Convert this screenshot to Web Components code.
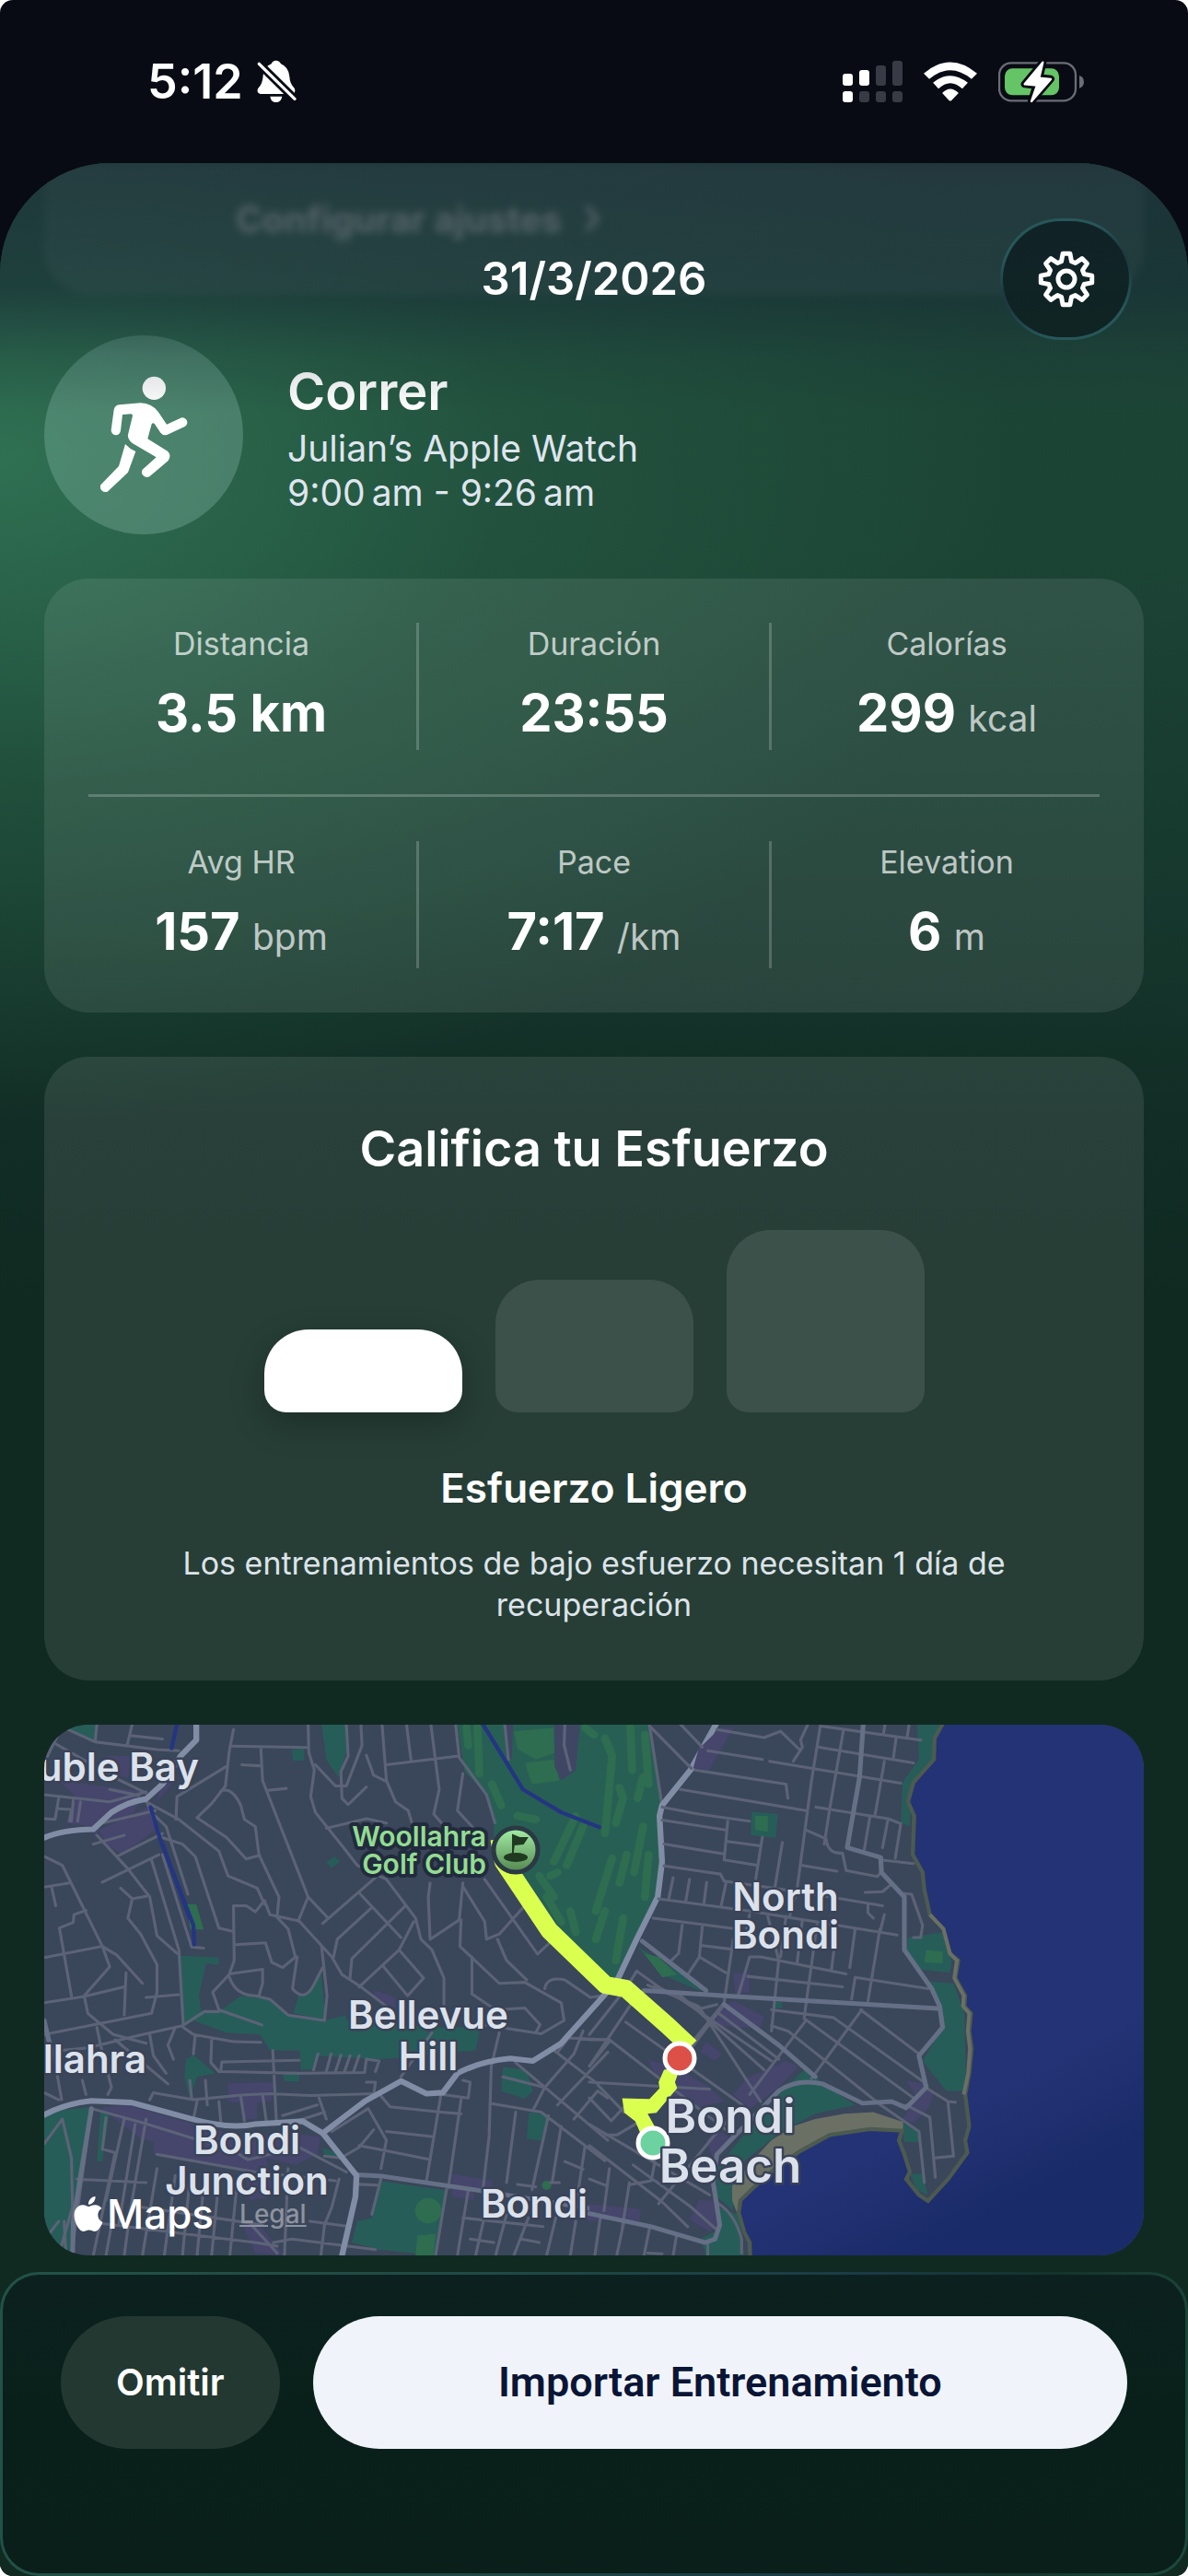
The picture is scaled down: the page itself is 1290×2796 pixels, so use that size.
<!DOCTYPE html>
<html lang="es">
<head>
<meta charset="utf-8">
<meta name="viewport" content="width=device-width, initial-scale=1">
<title>Entrenamiento</title>
<style>
  html { background: #fff; }
  body {
    margin: 0;
    font-family: Inter, "Liberation Sans", sans-serif;
    color: #fff;
  }
</style>
</head>
<body>

<workout-screen>
  <status-bar slot="status">5:12</status-bar>

  <sheet-header slot="header">31/3/2026</sheet-header>
  <settings-banner>Configurar ajustes</settings-banner>

  <activity-summary>
    Correr
    <span slot="source">Julian’s Apple Watch</span>
    <span slot="time">9:00&#8239;am - 9:26&#8239;am</span>
  </activity-summary>

  <stats-card>
    <stat-cell slot="top" label="Distancia">3.5 km</stat-cell>
    <stat-cell slot="top" label="Duración" divided>23:55</stat-cell>
    <stat-cell slot="top" label="Calorías" unit="kcal" divided>299</stat-cell>
    <stat-cell slot="bottom" label="Avg HR" unit="bpm">157</stat-cell>
    <stat-cell slot="bottom" label="Pace" unit="/km" divided>7:17</stat-cell>
    <stat-cell slot="bottom" label="Elevation" unit="m" divided>6</stat-cell>
  </stats-card>

  <effort-card>
    <span slot="title">Califica tu Esfuerzo</span>
    <span slot="level">Esfuerzo Ligero</span>
    Los entrenamientos de bajo esfuerzo necesitan 1 día de recuperación
  </effort-card>

  <route-map></route-map>

  <action-bar slot="footer">
    <pill-button kind="ghost">Omitir</pill-button>
    <pill-button kind="solid">Importar Entrenamiento</pill-button>
  </action-bar>
</workout-screen>

<script>
//SCREEN: STATUS BAR, THEN THE SHEET WITH ITS CONTENT AND FOOTER
class WorkoutScreen extends HTMLElement {
  constructor() {
    super();
    const root = this.attachShadow({ mode: 'open' });
    root.innerHTML = `
    <style>
      :host {
        display: flex;
        flex-direction: column;
        min-height: 100vh;
        background: #080b14;
        border-radius: 14px;
        overflow: hidden;
      }
      .sheet {
        position: relative;
        flex: 1;
        display: flex;
        flex-direction: column;
        border-radius: 120px 120px 0 0;
        overflow: hidden;
        background:
          radial-gradient(ellipse 1100px 720px at 0 320px, rgba(48, 114, 84, .95), rgba(40, 96, 70, .5) 50%, transparent),
          linear-gradient(#1d4537 0, #1c4435 420px, #173a2f 740px, #122d25 1040px, #102a22 1240px);
      }
      .content {
        display: flex;
        flex-direction: column;
        gap: 48px;
        padding: 0 48px;
      }
      .footer {
        flex: 1;
        display: flex;
        margin-top: 18px;
      }
      ::slotted([slot=footer]) { flex: 1; }
    </style>
    <slot name="status"></slot>
    <main class="sheet">
      <div class="content"><slot></slot></div>
      <slot name="header"></slot>
      <div class="footer"><slot name="footer"></slot></div>
    </main>`;
  }
}

//CLOCK AND SYSTEM ICONS
class StatusBar extends HTMLElement {
  constructor() {
    super();
    const root = this.attachShadow({ mode: 'open' });
    root.innerHTML = `
    <style>
      :host {
        display: flex;
        align-items: center;
        justify-content: space-between;
        height: 177px;
        padding: 0 113px 0 160px;
        font-size: 52px;
        font-weight: 600;
      }
      div { display: flex; align-items: center; }
      .clock { gap: 15px; }
      .system { gap: 23px; }
      svg { display: block; }
    </style>
    <div class="clock">
      <slot></slot>
      <svg width="43" height="47" viewBox="418 44 129 141">
        <path fill="#fff" d="M480 46Q491 46 496 57Q521 67 524 98Q525 122 540 136Q546 150 535 155L430 155Q416 152 421 138Q437 122 438 95Q440 66 465 57Q469 46 480 46Z"/>
        <path fill="#fff" d="M461 163h39q-4 19-20 19q-16 0-19-19z"/>
        <path stroke="#080b14" stroke-width="27" d="M418 50L552 182"/>
        <path stroke="#fff" stroke-width="10" stroke-linecap="round" d="M425 57L541 171"/>
      </svg>
    </div>
    <div class="system">
      <svg width="65" height="45" viewBox="108 72 195 135" fill="#383b45">
        <g fill="#fff">
          <rect x="108" y="114" width="33" height="39" rx="9"/>
          <rect x="162" y="102" width="33" height="51" rx="9"/>
          <rect x="108" y="171" width="33" height="36" rx="9"/>
        </g>
        <rect x="216" y="87" width="33" height="66" rx="9"/>
        <rect x="270" y="72" width="33" height="81" rx="9"/>
        <rect x="162" y="171" width="33" height="36" rx="9"/>
        <rect x="216" y="171" width="33" height="36" rx="9"/>
        <rect x="270" y="171" width="33" height="36" rx="9"/>
      </svg>
      <svg width="58" height="43" viewBox="371 75 173 128" fill="#fff">
        <path d="M371 113Q457 39 544 113L526 131Q457 74 389 131Z"/>
        <path d="M401 143Q457 97 514 143L496 162Q457 126 419 162Z"/>
        <path d="M431 176Q457 149 484 176L461 200Q457 203 453 200Z"/>
      </svg>
      <svg width="93" height="46" viewBox="612 71 279 138">
        <rect x="615" y="78" width="249" height="123" rx="39" fill="none" stroke="#6b6d75" stroke-width="7"/>
        <path fill="#6b6d75" d="M876 119Q891 123 891 140Q891 156 876 160Z"/>
        <rect x="633" y="96" width="177" height="87" rx="25" fill="#65c466"/>
        <g stroke-linejoin="round">
          <path fill="#080b14" stroke="#080b14" stroke-width="24" d="M757 76L698 147L736 151L720 203L783 130L746 126Z"/>
          <path fill="#fff" stroke="#fff" stroke-width="7" d="M757 76L698 147L738 151L720 203L783 131L745 127Z"/>
        </g>
      </svg>
    </div>`;
  }
}

//DATE AND SETTINGS, LAID OVER THE SCROLLED CONTENT
class SheetHeader extends HTMLElement {
  constructor() {
    super();
    const root = this.attachShadow({ mode: 'open' });
    root.innerHTML = `
    <style>
      :host {
        position: absolute;
        inset: 0 0 auto;
        box-sizing: border-box;
        display: grid;
        grid-template-columns: 1fr auto 1fr;
        align-items: center;
        height: 270px;
        padding: 60px 61px 78px;
        background: linear-gradient(rgba(28, 44, 56, .72) 0, rgba(24, 46, 54, .64) 135px, rgba(24, 46, 54, .18) 210px, transparent);
        pointer-events: none;
      }
      h1 {
        grid-column: 2;
        margin: 0;
        font-size: 49px;
        line-height: 60px;
        font-weight: 600;
      }
      button {
        justify-self: end;
        display: grid;
        place-items: center;
        width: 143px;
        height: 132px;
        padding: 0;
        color: inherit;
        border: 3px solid transparent;
        border-radius: 66px;
        background:
          linear-gradient(#112227, #0f2423) padding-box,
          linear-gradient(160deg, #27575a 0 25%, #1d3a40 45% 55%, #27575a 80%) border-box;
        pointer-events: auto;
      }
    </style>
    <h1><slot></slot></h1>
    <button aria-label="Ajustes">
      <svg width="62" height="62" viewBox="-31 -31 62 62" fill="none" stroke="currentColor" stroke-width="5" stroke-linejoin="round">
        <path d="${this.gear()}"/>
        <circle r="9"/>
      </svg>
    </button>`;
  }

  //EIGHT TEETH, EACH WITH TWO OUTER AND TWO BASE POINTS
  gear() {
    let d = '';
    for (let i = 0; i < 8; i++) {
      const points = [[20, -16], [28, -8], [28, 8], [20, 16]].map(([r, turn]) => {
        const a = (i * 45 + turn) * Math.PI / 180;
        return `${(r * Math.sin(a)).toFixed(1)} ${(-r * Math.cos(a)).toFixed(1)}`;
      });
      d += `${i ? 'L' : 'M'}${points.join('L')}`;
    }
    return d + 'Z';
  }
}

//CARD THAT HAS SCROLLED UNDER THE HEADER
class SettingsBanner extends HTMLElement {
  constructor() {
    super();
    const root = this.attachShadow({ mode: 'open' });
    root.innerHTML = `
    <style>
      :host {
        box-sizing: border-box;
        display: flex;
        align-items: center;
        gap: 24px;
        height: 142px;
        margin-bottom: -3px;
        padding: 0 208px 22px;
        border-radius: 0 0 48px 48px;
        background: rgba(255, 255, 255, .11);
        color: rgba(255, 255, 255, .75);
        font-size: 39px;
        font-weight: 700;
        filter: blur(4px);
      }
    </style>
    <span><slot></slot></span>
    <svg width="18" height="30" viewBox="0 0 18 30" fill="none" stroke="currentColor" stroke-width="5"><path d="M3 2L14 15L3 28"/></svg>`;
  }
}

//ACTIVITY ICON, NAME, SOURCE AND TIME
class ActivitySummary extends HTMLElement {
  constructor() {
    super();
    const root = this.attachShadow({ mode: 'open' });
    root.innerHTML = `
    <style>
      :host {
        display: flex;
        align-items: center;
        gap: 48px;
      }
      .icon {
        flex: none;
        width: 216px;
        height: 216px;
        border-radius: 50%;
        background: rgba(134, 184, 170, .36);
      }
      svg { display: block; }
      h2 {
        margin: 0;
        padding-top: 2px;
        font-size: 56px;
        line-height: 76px;
        font-weight: 600;
      }
      p {
        margin: 0;
        font-size: 39px;
        line-height: 48px;
        color: #dfe5ee;
      }
    </style>
    <div class="icon">
      <svg width="216" height="216" viewBox="-6 12 648 648" fill="#fff">
        <circle cx="352" cy="184" r="38"/>
        <path d="M238 238L308 232Q345 233 366 262L393 302L437 282A15 15 0 0 1 452 309L394 336Q382 340 373 329L354 301Q348 295 344 301L331 349L396 389Q410 402 398 420L337 472A17 17 0 0 1 314 449L359 409L281 363Q265 350 267 335L282 274Q282 268 276 268L249 270L243 322A15 15 0 0 1 212 320L221 254Q224 240 238 238Z"/>
        <path d="M258 366Q272 382 292 390L267 458L200 521A17 17 0 0 1 178 499L237 438Z"/>
      </svg>
    </div>
    <div>
      <h2><slot></slot></h2>
      <p><slot name="source"></slot></p>
      <p><slot name="time"></slot></p>
    </div>`;
  }
}

//TWO ROWS OF FIGURES
class StatsCard extends HTMLElement {
  constructor() {
    super();
    const root = this.attachShadow({ mode: 'open' });
    root.innerHTML = `
    <style>
      :host {
        display: flex;
        flex-direction: column;
        gap: 48px;
        padding: 48px;
        border-radius: 48px;
        background: rgba(255, 255, 255, .09);
      }
      .row { display: flex; gap: 24px; }
      hr {
        width: 100%;
        height: 3px;
        margin: 0;
        border: 0;
        background: rgba(255, 255, 255, .22);
      }
      ::slotted(*) { flex: 1 1 0; }
      ::slotted([divided]) { flex: 1 1 27px; }
    </style>
    <div class="row"><slot name="top"></slot></div>
    <hr>
    <div class="row"><slot name="bottom"></slot></div>`;
  }
}

//LABEL OVER A FIGURE, WITH A RULE BEFORE IT WHEN DIVIDED
class StatCell extends HTMLElement {
  constructor() {
    super();
    const root = this.attachShadow({ mode: 'open' });
    const unit = this.getAttribute('unit');
    root.innerHTML = `
    <style>
      :host { display: flex; gap: 24px; text-align: center; }
      :host([divided])::before {
        content: '';
        width: 3px;
        background: rgba(255, 255, 255, .2);
      }
      .cell { flex: 1; }
      .label {
        font-size: 34px;
        line-height: 46px;
        color: rgba(255, 255, 255, .7);
      }
      .value {
        margin-top: 12px;
        font-size: 56px;
        line-height: 80px;
        font-weight: 700;
        white-space: nowrap;
      }
      .unit {
        font-size: 39px;
        line-height: 46px;
        font-weight: 400;
        color: rgba(255, 255, 255, .7);
      }
    </style>
    <div class="cell">
      <div class="label">${this.getAttribute('label')}</div>
      <div class="value"><slot></slot>${unit ? ` <span class="unit">${unit}</span>` : ''}</div>
    </div>`;
  }
}

//EFFORT RATING IN THREE STEPS
class EffortCard extends HTMLElement {
  constructor() {
    super();
    const root = this.attachShadow({ mode: 'open' });
    root.innerHTML = `
    <style>
      :host {
        display: block;
        padding: 60px 96px;
        border-radius: 48px;
        background: rgba(255, 255, 255, .095);
        text-align: center;
      }
      h2 {
        margin: 0;
        font-size: 54px;
        line-height: 80px;
        font-weight: 600;
      }
      .levels {
        display: flex;
        justify-content: center;
        align-items: flex-end;
        gap: 36px;
        margin: 48px 0;
      }
      input {
        appearance: none;
        width: 215px;
        height: 90px;
        margin: 0;
        border-radius: 48px 48px 24px 24px;
        background: rgba(255, 255, 255, .1);
      }
      .medium { height: 144px; }
      .high { height: 198px; }
      input:checked {
        background: #fff;
        box-shadow: 0 12px 36px rgba(0, 0, 0, .25);
      }
      h3 {
        margin: 0;
        font-size: 44px;
        line-height: 69px;
        font-weight: 600;
      }
      p {
        max-width: 960px;
        margin: 24px auto 0;
        font-size: 34px;
        line-height: 45px;
        color: #dde3e9;
      }
    </style>
    <h2><slot name="title"></slot></h2>
    <div class="levels">
      <input type="radio" name="effort" aria-label="Ligero" checked>
      <input type="radio" name="effort" aria-label="Moderado" class="medium">
      <input type="radio" name="effort" aria-label="Alto" class="high">
    </div>
    <h3><slot name="level"></slot></h3>
    <p><slot></slot></p>`;
  }
}

//MAP WITH THE ROUTE
class RouteMap extends HTMLElement {
  constructor() {
    super();
    const root = this.attachShadow({ mode: 'open' });
    root.innerHTML = `
    <style>
      :host {
        display: block;
        position: relative;
        border-radius: 48px;
        overflow: hidden;
      }
      svg { display: block; }
      .map { width: 100%; height: auto; }
      .road { fill: none; stroke-linejoin: round; stroke-linecap: round; }
      .minor { stroke: #5c6377; stroke-width: 8; }
      .mid { stroke: #656f86; stroke-width: 13; }
      .major { stroke: #818da5; stroke-width: 16; }
      .place {
        font-weight: 600;
        fill: #dce2ec;
        text-anchor: middle;
        stroke: #3a4358;
        stroke-width: 5;
        paint-order: stroke;
        stroke-linejoin: round;
      }
      .town { font-size: 42px; }
      .edge { text-anchor: end; }
      .beach { font-size: 51px; }
      .club {
        font-size: 30px;
        font-weight: 600;
        fill: #93dc92;
        text-anchor: end;
        stroke: #222b3d;
        stroke-width: 8;
        paint-order: stroke;
        stroke-linejoin: round;
      }
      .credit {
        position: absolute;
        left: 32px;
        bottom: 18px;
        display: flex;
        align-items: center;
        gap: 4px;
        font-size: 44px;
        line-height: 54px;
        font-weight: 500;
      }
      a {
        margin-left: 24px;
        font-size: 28px;
        font-weight: 500;
        color: #8d939f;
      }
    </style>
    <svg class="map" viewBox="0 0 1194 576">
      <defs>
        <linearGradient id="sea" x1="0" y1="0" x2=".4" y2="1">
          <stop offset=".8" stop-color="#243375"/>
          <stop offset="1" stop-color="#1a2b69"/>
        </linearGradient>
        <linearGradient id="pin" x1="0" y1="0" x2="0" y2="1">
          <stop offset="0" stop-color="#a5efa6"/>
          <stop offset="1" stop-color="#54864f"/>
        </linearGradient>
      </defs>
      <rect width="1194" height="576" fill="#3a465a"/>

      <!-- west half -->
      <g transform="translate(-8 -12) scale(.3954 .3827)">
        <g fill="#275d59">
          <path d="M70 35L165 30L158 80Z"/>
          <path d="M782 30L848 30L850 110L828 180L795 130Z"/>
          <path d="M700 102L733 98L735 132L704 134Z"/>
          <path d="M795 420L818 405L832 420L808 438Z"/>
          <path d="M393 686L500 692L500 712L465 708L445 800L452 850L500 845L560 800L630 808L690 855L790 870L850 855L850 870L1080 890L1218 890L1205 955L1090 965L1000 975L940 980L850 975L770 970L755 1010L725 1010L722 955L640 955L612 910L520 905L430 870L402 880Z"/>
          <path d="M780 735L795 870L705 850L718 800L750 790Z"/>
          <path d="M410 980L430 968L490 1020L440 1030L420 1090L405 1030Z"/>
          <path d="M675 1022L722 1020L720 1043L680 1042Z"/>
          <path d="M1280 1002L1345 1010L1362 1070L1340 1092L1275 1070Z"/>
          <path d="M1352 1130L1405 1140L1385 1212L1345 1205Z"/>
          <path d="M20 1130L150 1115L100 1440L98 1537L20 1537Z"/>
          <path d="M175 1130L200 1130L180 1270L165 1270Z"/>
          <path d="M940 1325L1125 1352L1095 1537L940 1520L865 1500L880 1440L920 1430Z"/>
          <path d="M785 1232L810 1240L840 1262L790 1255Z"/>
          <path fill="#285f55" d="M1155 30L1682 30L1717 260L1712 400L1705 520L1647 660L1590 750L1540 740L1420 600L1330 520L1255 420L1255 300L1235 230L1175 165Z"/>
        </g>
        <g fill="#2e6d50">
          <path d="M410 540L438 540L458 612L422 612Z"/>
          <path d="M1310 50L1420 40L1425 110L1370 130L1320 100Z"/>
          <path d="M1340 140L1420 130L1435 190L1360 200Z"/>
          <path d="M1045 1480L1095 1475L1090 1537L1040 1537Z"/>
          <circle cx="1075" cy="1410" r="36"/>
          <circle cx="1400" cy="1338" r="13"/>
        </g>
        <g class="road" stroke="#2e6d50" stroke-width="22">
          <path d="M1180 40L1185 90M1210 40L1215 170M1250 200L1275 260M1320 290L1370 300M1480 290L1420 420M1500 320L1455 430M1380 460L1420 520M1465 560L1480 620M1410 460L1430 450M1440 590L1400 520"/>
          <path d="M1505 40L1530 60M1560 70L1580 120L1560 340M1630 40L1635 160M1670 60L1680 200M1600 210L1610 240L1590 310M1665 320L1640 450M1580 410L1535 560M1620 400L1600 480M1560 560L1535 640M1680 400L1670 520M1610 580L1590 700M1665 180L1650 240"/>
        </g>
        <path fill="#3f4663" d="M1420 30L1492 30L1480 160L1440 190L1422 150ZM1282 30L1308 30L1304 130L1290 120Z"/>
        <g fill="#46456c">
          <path d="M60 190L290 220L260 300L180 310L160 350L150 320L80 310L110 240Z"/>
          <path d="M170 330L310 262L325 330L235 400L190 370Z"/>
          <path d="M190 120L260 120L250 180L200 175ZM345 190L385 180L330 250Z"/>
          <path d="M175 1118L250 1110L380 1150L440 1165L560 1200L700 1190L780 1200L770 1250L710 1280L630 1260L650 1370L585 1380L570 1290L320 1250L320 1215L285 1205Z"/>
          <path d="M525 1048L650 1045L645 1100L605 1105L605 1150L570 1150L565 1105L525 1100Z"/>
          <path d="M930 785L985 805L985 835L925 805ZM1010 840L1090 840L1085 910L1040 880Z"/>
          <path d="M1140 1305L1250 1325L1250 1350L1200 1352L1200 1380L1140 1370Z"/>
          <path d="M560 1440L620 1460L680 1537L600 1530ZM1490 1390L1660 1410L1655 1440L1500 1435Z"/>
        </g>
        <g class="road minor">
          <path d="M75 40L160 80L330 102L390 105M262 30L248 90M255 62L345 72M160 80L165 30M50 85L110 120L210 180L300 225M65 45L20 140"/>
          <path d="M20 230L200 250L300 222M60 240L50 300L20 298M60 270L95 272L90 305M100 245L95 305M120 250L112 305M200 215L280 232M300 250L390 300L500 390L525 460L605 495L625 540"/>
          <path d="M300 245L340 350L400 370L435 405L500 608L540 618M165 345L250 440L310 520L330 630L385 680M180 310L325 275M220 405L345 340M180 478L335 400M155 370L240 345"/>
          <path d="M315 415L390 670L402 880M345 400L425 662L458 665M325 290L355 320L415 512M20 405L70 430L180 660L200 718L130 800L140 850L210 910L300 935M230 495L262 525L300 518M262 525L250 580L285 625L330 712L330 790L315 850L20 910"/>
          <path d="M20 492L90 480M40 490L52 545M20 692L180 660L220 685L290 765M62 608L100 592L102 570L135 558M62 608L95 800M20 820L130 802L240 775M300 805L390 797M245 735L240 855"/>
          <path d="M540 45L528 110L518 205L480 255L440 295L520 350L575 412L612 402M520 150L385 235L382 300M530 92L745 96M615 95L620 190L745 520L800 580M563 145L612 148M630 218L685 212M505 220Q535 205 560 260L570 300L600 320L610 400L665 520L660 575"/>
          <path d="M745 30L747 110L762 160L752 235L765 280L850 390L880 430L960 470L1040 580L1055 640L1085 670L1118 750L1118 830M785 595L930 465M795 325L905 298L960 310M850 30L855 120L835 165L838 240L855 258L905 208M890 30L893 90L850 205L820 205L765 145M905 118L925 175L955 190"/>
          <path d="M948 30L960 190L985 250L1020 275L1030 310M960 145L1158 120M1015 30L1028 135M1082 30L1105 215L1090 285L1120 320M1150 30L1160 125L1235 230L1258 310M1170 170L1155 275L1195 320"/>
          <path d="M540 545L575 545L600 562L625 530L640 570L720 588L810 690L838 740L890 775L960 830M745 520L718 588M540 545L542 700L528 740L483 790L500 840L618 883M545 655L628 650L645 705L675 720L710 690L690 610L660 578M530 738L620 725L620 765L610 800M528 745Q545 800 600 800L640 810L690 855L790 870L797 800L782 660M715 690L702 780Q735 820 760 770L785 720"/>
          <path d="M885 508L1000 635M1012 545L865 695L860 750M920 550L825 640L815 690M885 775L995 670L1035 590M950 715L1018 800M1018 800L1062 750L995 670M1080 480L1075 520L1080 640L1160 585L1170 480M1165 585L1162 660L1270 765L1340 762L1440 820L1448 870L1385 908L1225 882"/>
          <path d="M1195 690L1195 795L1260 840L1340 835L1382 882L1370 905M1170 490L1230 590L1235 640L1270 625L1340 545M1230 470L1375 682L1410 648M1265 640L1290 700L1345 755M1395 780Q1400 745 1450 755L1520 805L1550 800M1270 905L1248 1000L1242 1200L1225 1350M1085 905L1000 1030"/>
          <path d="M20 870L45 960L68 1095M20 960L140 948L290 910L400 885L460 845L500 845M380 890L360 940L375 980M402 890L430 910L540 930L615 932M480 925L478 990L500 1015L720 1020L900 1018L905 980L940 985L930 1015M505 1015L508 988L720 983M648 955L658 1160M165 890L175 940L205 1060L195 1080M215 925L360 1050M310 910L320 970L355 1020M435 910L430 965M60 1095L20 1075M125 1040L135 1080M310 1095L320 1075L430 1095L560 1082L640 1078L750 1083L930 1078"/>
          <path d="M760 1010L772 965M795 1015L808 965M820 1015L835 968M845 1015L860 970M870 1015L885 970M905 1045L930 1045L925 1080M420 1040L425 1090M463 1040L468 1110M560 1085L570 1155M620 1080L630 1155M500 1100L505 1155M440 1100L430 1150M675 1140L770 1110M775 1090L795 1150M700 1160L790 1130M810 1185L910 1120L960 1210L945 1290M940 1078L970 1115L1110 1130L1165 1135M885 1225L960 1240L1080 1265M960 1185L1090 1200M925 1180L885 1230L835 1260L790 1255"/>
          <path d="M1110 1080L1070 1325M1170 1040L1190 1045L1185 1090L1112 1080M1165 1095L1130 1345M1245 1105L1385 1130L1560 1268M1315 1130L1290 1330M1315 990L1568 1210M1420 955L1540 1050M1430 960L1460 920L1568 925M1365 1120L1395 1060L1475 965L1500 900M1430 1110L1568 960M1405 1140L1360 1350M1440 1170L1415 1330M1475 1150L1540 1070L1568 1090M1505 1230L1480 1400"/>
          <path d="M150 1120L95 1537M150 1120L290 1160L540 1240L580 1265L720 1230L850 1300M240 1150L190 1380M270 1165L225 1450M300 1150L250 1450M190 1145L180 1235L215 1245L155 1537M330 1250L600 1300L820 1325M380 1310L350 1537M330 1290L290 1537M420 1320L400 1537M460 1320L440 1537M500 1320L480 1537M550 1330L530 1537M110 1320L300 1330M130 1440L600 1500L660 1510M205 1450L190 1537M250 1460L240 1537M580 1440L660 1530M650 1500L700 1490L930 1520M830 1320L810 1400L790 1450L780 1537M750 1440L860 1455M690 1290L680 1537M20 1220L70 1150L95 1260L98 1400L60 1537M75 1440L80 1537M30 1480L60 1440M290 1400L620 1450"/>
          <path d="M945 1320L920 1420M885 1335L935 1337M1125 1350L1095 1537M1185 1350L1155 1537M1235 1400L1205 1537M1290 1420L1260 1537M1350 1430L1310 1537M1425 1430L1400 1537M1480 1440L1465 1537M1190 1490L1255 1500M1330 1490L1380 1500M1170 1430L1390 1455M1450 1270L1500 1292M1410 1330L1435 1330M1320 1335L1370 1342M1280 1030L1395 1060"/>
          <path d="M1285 30L1295 130M1450 30L1448 90L1465 160M1682 30L1717 260"/>
        </g>
        <path class="road" stroke="#243582" stroke-width="11" d="M1225 30L1335 215L1440 280L1545 322M385 30L370 98M312 265L340 360L430 600L432 655M345 370L420 580"/>
        <path class="road mid" d="M150 1120L100 1440L98 1537M20 870L40 960M878 1308L950 1312L1200 1350L1568 1412"/>
        <path class="road major" d="M20 352Q70 330 155 328L205 280Q250 250 300 242L345 200L395 120L438 75L438 30"/>
        <path class="road major" stroke-width="19" d="M20 1138Q80 1105 150 1098L260 1103L420 1148Q530 1180 600 1164L730 1156L785 1190L878 1310L875 1370L838 1537"/>
        <path class="road major" d="M785 1190L900 1100L1000 1042L1070 1078L1115 1075L1155 1020Q1220 985 1300 978L1362 985L1440 935L1592 760L1647 640L1705 520L1717 420L1710 290L1717 260L1795 160L1865 30"/>
      </g>

      <!-- east half -->
      <g transform="translate(592 -12) scale(.3954 .3827)">
        <g fill="#275d59">
          <path d="M900 30L960 30L945 130L885 195L880 320L855 310L860 195L905 130Z"/>
          <path d="M445 278L518 285L512 352L443 345Z"/>
          <path d="M130 660L325 780L300 785L200 740Z"/>
          <path d="M875 635L970 620L995 700L990 735L905 725L870 680Z"/>
          <path d="M930 760L1000 765L1030 850L1035 1070L980 1070L915 985L970 890L965 850Z"/>
          <path d="M350 1290L420 1200L520 1080L600 1000L640 1050L730 1110L620 1135L520 1190L400 1290L395 1410L350 1370Z"/>
          <path d="M858 1160L900 1185L905 1215L865 1215Z"/>
          <path d="M880 1305L915 1305L930 1365L900 1350Z"/>
          <path d="M350 1400L410 1420L425 1537L320 1537L305 1490L350 1465Z"/>
          <path d="M510 818L530 818L530 835L510 835Z"/>
        </g>
        <g fill="#2e6d50">
          <path d="M925 670L970 675L970 708L920 705Z"/>
          <path d="M150 680L190 690L240 740L200 748Z"/>
          <path d="M455 290L490 290L490 335L455 330Z"/>
        </g>
        <g fill="#46456c">
          <path d="M360 40L395 40L330 160L285 155L300 100Z"/>
          <path d="M395 735L440 735L440 790L400 795ZM370 825L400 815L480 860L470 890L410 890L340 885Z"/>
          <path d="M320 930L365 965L345 985L305 960ZM160 980L250 1010L330 1060L370 1100L250 1130L200 1060Z"/>
          <path d="M430 1035L540 985L575 1000L520 1060L440 1120L395 1080ZM320 1210L350 1180L400 1210L340 1260Z"/>
          <path d="M300 1380L350 1380L358 1450L330 1470L275 1435ZM0 1390L140 1405L135 1430L0 1440Z"/>
          <path d="M870 1040L920 1050L945 1080L930 1120L890 1160L860 1150L900 1090Z"/>
        </g>
        <g class="road minor">
          <path d="M350 45L480 68L525 50L575 100M165 35L280 155M250 30L310 95M325 105L475 130M600 30L580 75L585 95L560 135M495 135L855 197M635 30L610 190L570 500L550 575M635 35L910 75M628 95L890 140M698 45L660 270L645 370M842 70L835 125M878 30L872 70M812 30L808 55M810 135L785 285"/>
          <path d="M290 160L540 200L545 240M250 215L595 275M200 265L300 285L440 305M200 302L375 330M380 305L370 415L460 430M375 362L470 375M205 370L370 398M475 350L455 480M530 365L510 490M205 432L360 455L370 475L575 505L805 545M595 330L650 355Q655 400 695 395L705 445L790 462L802 450M580 430L680 447"/>
          <path d="M622 265L820 298L855 312L840 410M770 295L755 385M820 300L805 380M800 415L890 425M865 510L885 512L915 600L910 635L890 635M828 485L805 505L757 507M765 540L765 565L780 580"/>
          <path d="M190 525L440 560L845 628M175 580L400 610M230 465L218 525M275 470L265 530M322 478L315 535M375 480L362 545M255 600L245 680L225 700M310 605L302 690L270 740M310 658L390 668M302 690L375 735M395 640L370 820M440 570L430 620M490 575L520 700L500 900M540 575L525 690M585 585L570 710M625 600L590 860M680 600L665 725M730 610L715 720M798 610L765 815M810 570L798 620"/>
          <path d="M410 795L440 690L470 690L705 738M435 745L695 775M720 810L730 748L930 780"/>
          <path d="M500 840L670 862L925 1050M590 865L890 1090M745 840L905 965M748 840L610 1035M595 870L440 1080M500 885L545 900L800 1110M355 850L520 980M230 795L500 985M370 820L260 960M350 825L300 838L180 770M370 825L220 1030M240 790L480 1010M160 770L300 830L470 1100"/>
          <path d="M0 925L55 925L400 1200L380 1220M100 875L420 1110M0 1000L130 800M0 910L100 780L130 730L210 790M0 1045L330 1065M55 930L0 1000M25 1055L95 1130M0 1090L60 1155L100 1110M45 1195L75 1195L150 1150M0 1225L200 1385L270 1455M0 1165L330 1365M120 1280L280 1400L345 1460M190 1390L340 1200L400 1130M55 1290L40 1410M0 1320L50 1340M110 1330L90 1460M115 1335L170 1325L180 1270M30 1430L15 1537M95 1440L75 1537M165 1460L150 1537M240 1475L230 1537M325 1500L325 1537M160 1530L200 1532"/>
          <path d="M930 1065L985 1100L1005 1102M985 1105L1000 1255L948 1260M870 1110L935 1145L950 1315M800 1110L905 1185L920 1330M355 1390Q400 1420 418 1490L418 1530"/>
        </g>
        <path class="road mid" d="M150 785L370 800L955 836M370 825L520 940L620 1030M145 645L320 785M0 1418L170 1455L318 1500L345 1490L358 1450L340 1330L350 1250L520 1070Q570 1035 640 1050L750 1105L830 1100L870 1118L925 1060L905 970L970 890L962 830L940 780L865 670L865 520L802 450L800 408L708 380L742 180L752 30"/>
        <path fill="#6b7064" d="M392 1340L450 1265L500 1210L560 1170L620 1150L700 1135L780 1130L862 1158L860 1190L770 1185L600 1260L440 1390L410 1430L392 1380Z"/>
        <path fill="url(#sea)" stroke="#4c5a50" stroke-width="11" d="M975 20L948 70L946 130L890 195L875 250L892 290L888 400L915 450L920 500L935 570L972 610L990 680L1013 700L1005 750L1032 800L1030 830L1048 850L1043 900L1050 950L1043 1020L1032 1080L1043 1170L1032 1210L1038 1245L985 1320L930 1382L905 1365L870 1320L880 1300L865 1250L850 1210L858 1183L770 1178L660 1195L580 1240L510 1290L450 1345L415 1380L410 1415L425 1470L440 1500L442 1550L1550 1550L1550 20Z"/>
        <path fill="none" stroke="#6b7064" stroke-width="10" d="M935 570L972 610L990 680L1009 700L1002 750L1028 800L1026 830L1043 850L1039 900L1045 950L1040 1020L1028 1080"/>
      </g>

      <!-- route, from the club to the beach -->
      <g transform="translate(592 -12) scale(.3954 .3827)" fill="#dbff4f">
        <path fill="none" stroke="#dbff4f" stroke-width="50" stroke-linejoin="round" d="M-247 355L-236 420L-110 615L45 770L100 780L215 885L277 945"/>
        <path d="M205 1010L270 1000L242 1025L235 1045L241 1062L184 1132L160 1135L180 1172L142 1195L126 1156L96 1132L90 1091L165 1093L193 1062L190 1045Z"/>
      </g>
      <g stroke="#fff" stroke-width="5">
        <circle cx="690" cy="362" r="16" fill="#dd5048"/>
        <circle cx="661" cy="454" r="16" fill="#6cd2a0"/>
      </g>
      <g transform="translate(512 136)">
        <circle r="24" fill="url(#pin)" stroke="#2a3944" stroke-width="5"/>
        <ellipse cy="8" rx="13" ry="5" fill="#1f3a20"/>
        <path d="M-3 8V-16L4 -13H12L8 -7L-1 -6" fill="#1f3a20" stroke="#1f3a20" stroke-width="2"/>
      </g>

      <g class="club">
        <text x="480" y="132">Woollahra</text>
        <text x="480" y="162">Golf Club</text>
      </g>
      <g class="place town">
        <text class="edge" x="168" y="61">Double Bay</text>
        <text class="edge" x="111" y="378">Woollahra</text>
        <text x="417" y="330">Bellevue</text>
        <text x="417" y="375">Hill</text>
        <text x="220" y="466">Bondi</text>
        <text x="220" y="510">Junction</text>
        <text x="532" y="535">Bondi</text>
        <text x="805" y="202">North</text>
        <text x="805" y="243">Bondi</text>
      </g>
      <g class="place beach">
        <text x="745" y="443">Bondi</text>
        <text x="745" y="497">Beach</text>
      </g>
    </svg>
    <div class="credit">
      <svg width="32" height="38" viewBox="2 0 20 24" fill="#fff"><path d="M12.152 6.896c-.948 0-2.415-1.078-3.96-1.04-2.04.027-3.91 1.183-4.961 3.014-2.117 3.675-.546 9.103 1.519 12.09 1.013 1.454 2.208 3.09 3.792 3.039 1.52-.065 2.09-.987 3.935-.987 1.831 0 2.35.987 3.96.948 1.637-.026 2.676-1.48 3.676-2.948 1.156-1.688 1.636-3.325 1.662-3.415-.039-.013-3.182-1.221-3.22-4.857-.026-3.04 2.48-4.494 2.597-4.559-1.429-2.09-3.623-2.324-4.39-2.376-2-.156-3.675 1.09-4.61 1.09zM15.53 3.83c.843-1.012 1.4-2.427 1.245-3.83-1.207.052-2.662.805-3.532 1.818-.78.896-1.454 2.338-1.273 3.714 1.338.104 2.715-.688 3.559-1.701"/></svg>
      <span>Maps</span>
      <a href="#legal">Legal</a>
    </div>`;
  }
}

//FOOTER PANEL
class ActionBar extends HTMLElement {
  constructor() {
    super();
    const root = this.attachShadow({ mode: 'open' });
    root.innerHTML = `
    <style>
      :host {
        box-sizing: border-box;
        display: flex;
        align-items: flex-start;
        gap: 36px;
        padding: 45px 63px 135px;
        border: 3px solid transparent;
        border-radius: 42px;
        background:
          linear-gradient(#0c211f, #09201a 45%, #0a1f19) padding-box,
          linear-gradient(100deg, #225247, #1f4a45 40%, #1a3a48 70%, #14332c 85%, #1d4a3c) border-box;
      }
      ::slotted([kind=solid]) { flex: 1; }
    </style>
    <slot></slot>`;
  }
}

class PillButton extends HTMLElement {
  constructor() {
    super();
    const root = this.attachShadow({ mode: 'open' });
    root.innerHTML = `
    <style>
      :host { display: flex; }
      button {
        flex: 1;
        height: 144px;
        padding: 0 60px;
        border: 0;
        border-radius: 72px;
        background: #223831;
        color: #fff;
        font: 600 40px/48px Inter, sans-serif;
      }
      :host([kind=solid]) button {
        background: #f0f4fa;
        color: #0a1536;
        font: 600 45px/54px Roboto, sans-serif;
      }
    </style>
    <button><slot></slot></button>`;
  }
}

customElements.define('workout-screen', WorkoutScreen)
customElements.define('status-bar', StatusBar)
customElements.define('sheet-header', SheetHeader)
customElements.define('settings-banner', SettingsBanner)
customElements.define('activity-summary', ActivitySummary)
customElements.define('stats-card', StatsCard)
customElements.define('stat-cell', StatCell)
customElements.define('effort-card', EffortCard)
customElements.define('route-map', RouteMap)
customElements.define('action-bar', ActionBar)
customElements.define('pill-button', PillButton)
</script>
</body>
</html>
